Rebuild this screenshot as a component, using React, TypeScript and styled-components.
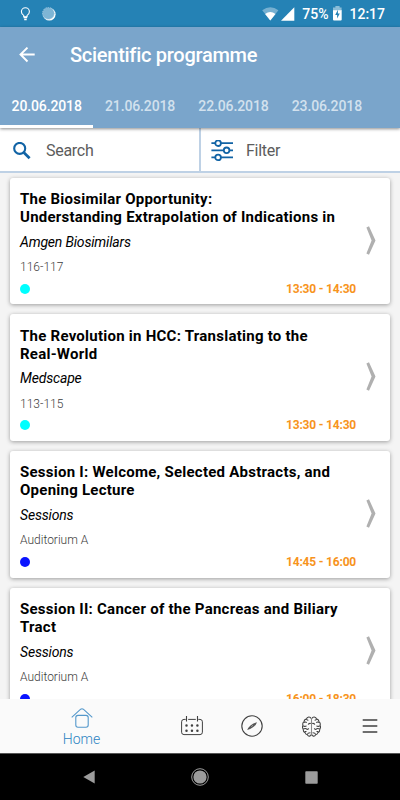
import React from "react";
import styled, { createGlobalStyle } from "styled-components";

const GlobalStyle = createGlobalStyle`
  * { box-sizing: border-box; }
  body { margin: 0; background: #f4f4f4; font-family: Roboto, "Liberation Sans", sans-serif; }
  svg { display: block; flex: none; }
`;

const Screen = styled.div`
  width: 400px;
  height: 800px;
  display: flex;
  flex-direction: column;
  overflow: hidden;
  background: #f4f4f4;
`;

const StatusBar = styled.div`
  height: 27px;
  flex: none;
  display: flex;
  align-items: center;
  background: #2582b5;
  color: #fff;
  padding: 0 15px 0 20px;
`;

const StatusText = styled.span<{ $gap: number }>`
  font-size: 14px;
  line-height: 27px;
  font-weight: 500;
  margin-left: ${(p) => p.$gap}px;
  padding-top: 1px;
`;

const StatusSpacer = styled.div`
  flex: 1;
`;

const Header = styled.header`
  flex: none;
  height: 101px;
  background: #7aa5cb;
  color: #fff;
  position: relative;
  z-index: 1;
  box-shadow: 0 1px 3px rgba(0, 0, 0, 0.45);
`;

const TitleRow = styled.div`
  height: 56px;
  display: flex;
  align-items: center;
  gap: 35px;
  padding-left: 19px;
`;

const PageTitle = styled.h1`
  margin: 0;
  font-size: 20px;
  line-height: 24px;
  font-weight: 500;
  letter-spacing: -0.27px;
`;

const Tabs = styled.nav`
  display: flex;
  height: 45px;
`;

const Tab = styled.div<{ $active?: boolean }>`
  width: 93.4px;
  height: 45px;
  text-align: center;
  font-size: 14px;
  line-height: 46px;
  font-weight: 500;
  white-space: nowrap;
  letter-spacing: -0.12px;
  color: ${(p) => (p.$active ? "#fff" : "#d2e1ee")};
  box-shadow: ${(p) => (p.$active ? "inset 0 -3px 0 #fff" : "none")};
`;

const Tools = styled.div`
  flex: none;
  height: 45px;
  display: flex;
  background: #fff;
  border-bottom: 2px solid #bed1e5;
`;

const Tool = styled.div<{ $gap: number; $inset: number; $divided?: boolean }>`
  width: ${(p) => (p.$divided ? 201 : 199)}px;
  display: flex;
  align-items: center;
  gap: ${(p) => p.$gap}px;
  padding: 2px 0 0 ${(p) => p.$inset}px;
  border-right: ${(p) => (p.$divided ? "2px solid #bed1e5" : "none")};
  font-size: 16px;
  letter-spacing: -0.28px;
  color: #5c5c5c;
`;

const List = styled.main`
  flex: 1;
  min-height: 0;
  overflow: hidden;
  display: flex;
  flex-direction: column;
  gap: 10px;
  padding: 4.7px 10px 0;
`;

const Card = styled.article`
  flex: none;
  height: 126.67px;
  display: flex;
  justify-content: space-between;
  background: #fff;
  border-radius: 3px;
  padding: 12px 14px 0 10px;
  box-shadow: 0 1px 4px rgba(0, 0, 0, 0.36);
`;

const CardBody = styled.div`
  width: 336px;
`;

const CardTitle = styled.h2`
  margin: 0;
  padding-top: 0.3px;
  height: 36px;
  font-size: 15px;
  letter-spacing: 0.25px;
  line-height: 18px;
  font-weight: 700;
  color: #000;
  white-space: pre;
`;

const Organiser = styled.div`
  margin-top: 9px;
  font-size: 14px;
  letter-spacing: -0.18px;
  line-height: 15px;
  font-style: italic;
  color: #000;
`;

const Room = styled.div`
  margin-top: 10.3px;
  font-size: 12px;
  font-weight: 300;
  line-height: 14px;
  color: #3c3c3c;
`;

const CardFooter = styled.div`
  margin-top: 7.7px;
  height: 14px;
  display: flex;
  align-items: center;
  justify-content: space-between;
`;

const Dot = styled.span<{ $color: string }>`
  width: 10px;
  height: 10px;
  margin-left: -0.4px;
  border-radius: 50%;
  background: ${(p) => p.$color};
`;

const Time = styled.span`
  font-size: 12px;
  letter-spacing: -0.2px;
  line-height: 14px;
  font-weight: 700;
  color: #f7941d;
`;

const ChevronCell = styled.div`
  padding-top: 36px;
`;

const BottomNav = styled.nav`
  flex: none;
  height: 54px;
  display: grid;
  grid-template-columns: 163px repeat(4, 59.25px);
  background: #fafafa;
`;

const NavItem = styled.div<{ $home?: boolean }>`
  display: flex;
  flex-direction: column;
  align-items: center;
  justify-content: ${(p) => (p.$home ? "flex-start" : "center")};
  padding-top: ${(p) => (p.$home ? 9 : 0)}px;
  color: #404040;
`;

const NavLabel = styled.span`
  font-size: 14px;
  font-weight: 300;
  line-height: 18px;
  margin-top: 2px;
  color: #2c83c2;
`;

const SystemBar = styled.div`
  flex: none;
  height: 47px;
  background: #000;
  border-top: 1px solid #555;
  display: grid;
  grid-template-columns: 82px 1fr 82px;
  align-items: center;
  justify-items: center;
  padding: 0 48px;
`;

const BulbIcon = () => (
  <svg width="11" height="14" viewBox="0 0 11 14" fill="none" stroke="#fff">
    <path d="M3.7 9.8V8.4Q1.4 7 1.4 4.8A4 4 0 0 1 9.4 4.8Q9.4 7 7.1 8.4v1.4z" strokeWidth="1.1" />
    <path d="M3.7 10.5h3.4M4.2 12.4h2.5" strokeWidth="1.5" />
  </svg>
);

const SyncDiscIcon = () => (
  <svg width="14" height="14" viewBox="0 0 14 14">
    <circle cx="7.3" cy="7.3" r="6.3" fill="#fff" />
    <circle cx="6.4" cy="6.3" r="5.9" fill="#7eb5d5" stroke="#a8cde3" strokeWidth="0.8" strokeDasharray="1.4 1" />
  </svg>
);

const WifiIcon = () => (
  <svg width="17" height="14" viewBox="0 0 17 14">
    <path d="M.2 3.3Q8.3-2.6 16.4 3.3L8.3 13.5z" fill="#76b0d1" />
    <path d="M3.1 6.9Q8.3 3.1 13.5 6.9L8.3 13.5z" fill="#fff" />
  </svg>
);

const SignalIcon = () => (
  <svg width="14" height="14" viewBox="0 0 14 14">
    <path d="M13.3.3v13.4H0z" fill="#fff" />
  </svg>
);

const BatteryIcon = () => (
  <svg width="9" height="15" viewBox="0 0 9 15">
    <path d="M2.4 0h4.2v1.5h2V5H0V1.5h2.4z" fill="#8bbdd8" />
    <path d="M0 4.2h8.7v9.3q0 1-1 1H1q-1 0-1-1z" fill="#fff" />
    <path d="M4.9 3.8L2.2 9h1.9v3.4L6.8 7.5H4.9z" fill="#2582b5" />
  </svg>
);

const BackIcon = () => (
  <svg width="16" height="16" viewBox="0 0 16 16" fill="none" stroke="#fff" strokeWidth="1.9">
    <path d="M15.7 7.5H1.8M8.5.6L1.5 7.5l7 7" />
  </svg>
);

const SearchIcon = () => (
  <svg width="18" height="18" viewBox="0 0 18 18" fill="none" stroke="#1163a5">
    <circle cx="6.7" cy="6.4" r="5.5" strokeWidth="2.1" />
    <path d="M10.8 10.5l5.8 5.8" strokeWidth="2.7" />
  </svg>
);

const FilterIcon = () => (
  <svg width="22" height="22" viewBox="0 0 22 22" fill="none" stroke="#1163a5">
    <path d="M.4 3.2h4M10 3.2h12M.4 10.3h12.2M18.6 10.3H22M.4 17.4h4M10 17.4h12" strokeWidth="1.8" />
    <circle cx="7.1" cy="3.2" r="2.8" strokeWidth="1.8" />
    <circle cx="15.6" cy="10.3" r="2.8" strokeWidth="1.8" />
    <circle cx="7.1" cy="17.4" r="2.8" strokeWidth="1.8" />
  </svg>
);

const ChevronIcon = () => (
  <svg width="10" height="29" viewBox="0 0 10 29">
    <path d="M.4 1.4L3 .3 9.5 14.5 3 28.7.4 27.6 5.6 14.5z" fill="#b0b0b0" />
  </svg>
);

const HomeIcon = () => (
  <svg width="22" height="20" viewBox="0 0 22 20" fill="none" stroke="#5498cb" strokeWidth="1.1">
    <path d="M.7 9.3L9.7 1.2Q11 .2 12.3 1.2L21.3 9.3" />
    <rect x="4.8" y="7.4" width="12.4" height="11.8" rx="2.2" />
  </svg>
);

const CalendarIcon = () => (
  <svg width="23" height="20" viewBox="0 0 23 20" fill="none" stroke="currentColor">
    <path d="M4.7 3.4H3A2.4 2.4 0 0 0 .6 5.8v10.4A2.4 2.4 0 0 0 3 18.6h16a2.4 2.4 0 0 0 2.4-2.4V5.8A2.4 2.4 0 0 0 19 3.4h-1.7M7.2 3.4h7.6" />
    <path d="M5.5 0v5.4M16.5 0v5.4" strokeWidth="1.1" />
    <path d="M5.5 9.6h12M5.5 14.8h12" strokeWidth="2.5" strokeLinecap="round" strokeDasharray="0 5.45" />
  </svg>
);

const CompassIcon = () => (
  <svg width="22" height="22" viewBox="0 0 22 22" fill="none" stroke="currentColor">
    <circle cx="11" cy="11" r="10.2" strokeWidth="1.1" />
    <path d="M16 7.2Q14.2 12.5 6.2 15.1Q8.5 9.2 16 7.2z" fill="#555" stroke="none" />
    <path d="M11.9 10.3l-1.6 1.3" stroke="#ccc" strokeWidth=".7" />
  </svg>
);

const BrainHalf = () => (
  <>
    <path d="M9.4 2.5Q8.7.6 6.9.7Q5 .8 4.6 2.8Q2.2 3 2.1 5.7Q.1 7 1 9.2Q-.1 11.2 1.2 13Q1 15.6 3 16.6Q3.4 18.7 5.4 18.8Q6.5 20.8 8.2 20.2Q9.4 19.9 9.4 18.5" />
    <path d="M4.6 2.8Q5 4.3 6.5 4.1M2.2 6.4Q3.7 5.4 4.8 6.6M9 7.4Q6.7 7 6.3 8.7M1 9.8Q2.8 10.9 4.7 9.9M1.4 13Q3.8 11.8 5.1 13.4Q6.6 13.6 6.8 12.3M3 16.5Q3.2 15.3 4.6 15.6M5.5 18.6Q6 16.9 8.6 17" />
  </>
);

const BrainIcon = () => (
  <svg width="19" height="21" viewBox="0 0 19.4 21" fill="none" stroke="currentColor" strokeWidth="1.05">
    <BrainHalf />
    <g transform="matrix(-1 0 0 1 19.4 0)">
      <BrainHalf />
    </g>
    <path d="M9.7 2v17" stroke="#888" strokeWidth="1.1" />
  </svg>
);

const MenuIcon = () => (
  <svg width="16" height="14" viewBox="0 0 16 14" stroke="currentColor" strokeWidth="1.3">
    <path d="M.7 1h14.6M.7 7h14.6M.7 13h14.6" />
  </svg>
);

const sessions = [
  {
    title: "The Biosimilar Opportunity:\nUnderstanding Extrapolation of Indications in",
    organiser: "Amgen Biosimilars",
    room: "116-117",
    color: "#00ffff",
    time: "13:30 - 14:30",
  },
  {
    title: "The Revolution in HCC: Translating to the\nReal-World",
    organiser: "Medscape",
    room: "113-115",
    color: "#00ffff",
    time: "13:30 - 14:30",
  },
  {
    title: "Session I: Welcome, Selected Abstracts, and\nOpening Lecture",
    organiser: "Sessions",
    room: "Auditorium A",
    color: "#0a14ff",
    time: "14:45 - 16:00",
  },
  {
    title: "Session II: Cancer of the Pancreas and Biliary\nTract",
    organiser: "Sessions",
    room: "Auditorium A",
    color: "#0a14ff",
    time: "16:00 - 18:30",
  },
];

const dates = ["20.06.2018", "21.06.2018", "22.06.2018", "23.06.2018"];

const StatusIcons = styled.div<{ $gap: number }>`
  display: flex;
  align-items: center;
  gap: ${(p) => p.$gap}px;
`;

const BatterySlot = styled.div`
  margin-left: 5px;
`;

export default function App() {
  return (
    <Screen>
      <GlobalStyle />
      <StatusBar>
        <StatusIcons $gap={11}>
          <BulbIcon />
          <SyncDiscIcon />
        </StatusIcons>
        <StatusSpacer />
        <StatusIcons $gap={2}>
          <WifiIcon />
          <SignalIcon />
        </StatusIcons>
        <StatusText $gap={7}>75%</StatusText>
        <BatterySlot>
          <BatteryIcon />
        </BatterySlot>
        <StatusText $gap={7}>12:17</StatusText>
      </StatusBar>
      <Header>
        <TitleRow>
          <BackIcon />
          <PageTitle>Scientific programme</PageTitle>
        </TitleRow>
        <Tabs>
          {dates.map((date, i) => (
            <Tab key={date} $active={i === 0}>
              {date}
            </Tab>
          ))}
        </Tabs>
      </Header>
      <Tools>
        <Tool $gap={15} $inset={13} $divided>
          <SearchIcon />
          Search
        </Tool>
        <Tool $gap={13} $inset={10}>
          <FilterIcon />
          Filter
        </Tool>
      </Tools>
      <List>
        {sessions.map((s) => (
          <Card key={s.title}>
            <CardBody>
              <CardTitle>{s.title}</CardTitle>
              <Organiser>{s.organiser}</Organiser>
              <Room>{s.room}</Room>
              <CardFooter>
                <Dot $color={s.color} />
                <Time>{s.time}</Time>
              </CardFooter>
            </CardBody>
            <ChevronCell>
              <ChevronIcon />
            </ChevronCell>
          </Card>
        ))}
      </List>
      <BottomNav>
        <NavItem $home>
          <HomeIcon />
          <NavLabel>Home</NavLabel>
        </NavItem>
        <NavItem>
          <CalendarIcon />
        </NavItem>
        <NavItem>
          <CompassIcon />
        </NavItem>
        <NavItem>
          <BrainIcon />
        </NavItem>
        <NavItem>
          <MenuIcon />
        </NavItem>
      </BottomNav>
      <SystemBar>
        <svg width="12" height="14" viewBox="0 0 12 14">
          <path d="M11.7.5v13L.3 7z" fill="#9c9c9c" />
        </svg>
        <svg width="18" height="18" viewBox="0 0 18 18">
          <circle cx="9" cy="9" r="8.3" fill="none" stroke="#9c9c9c" />
          <circle cx="9" cy="9" r="6.6" fill="#9c9c9c" />
        </svg>
        <svg width="13" height="13" viewBox="0 0 13 13">
          <rect x=".3" y=".3" width="12.4" height="12.4" rx=".7" fill="#9c9c9c" />
        </svg>
      </SystemBar>
    </Screen>
  );
}
